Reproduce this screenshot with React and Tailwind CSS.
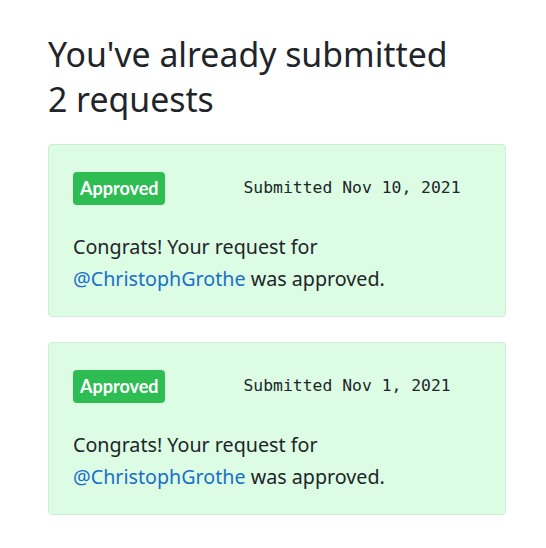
import React from 'react';

const requests = [
  { id: 1, date: 'Nov 10, 2021', handle: '@ChristophGrothe' },
  { id: 2, date: 'Nov 1, 2021', handle: '@ChristophGrothe' },
];

const RequestCard = ({ date, handle }) => (
  <div className="bg-[#dcfce4] border border-[#cdeed5] rounded-[4px] pt-[27px] pb-[21px] px-[24px]">
    <div className="flex items-center">
      <span className="bg-[#2dbd53] text-white font-bold text-[18px] leading-[33px] h-[33px] px-[7px] rounded-[4px] font-['Lato',sans-serif]">
        Approved
      </span>
      <span className="ml-[78px] font-['DejaVu_Sans_Mono',monospace] text-[16.4px] text-[#212529]">
        Submitted {date}
      </span>
    </div>
    <p className="mt-[26px] text-[19.7px] leading-[32px] text-[#212529]">
      Congrats! Your request for
      <br />
      <a className="text-[#1a6fc9]">{handle}</a> was approved.
    </p>
  </div>
);

export default function App() {
  return (
    <div className="bg-white min-h-screen pl-[48px] pr-[40px] pt-[32px] font-['Noto_Sans',sans-serif]">
      <h2 className="text-[33.8px] leading-[45px] text-[#212529] font-normal">
        You've already submitted
        <br />
        2 requests
      </h2>
      <div className="mt-[22px] flex flex-col gap-[25px]">
        {requests.map(r => (
          <RequestCard key={r.id} date={r.date} handle={r.handle} />
        ))}
      </div>
    </div>
  );
}
